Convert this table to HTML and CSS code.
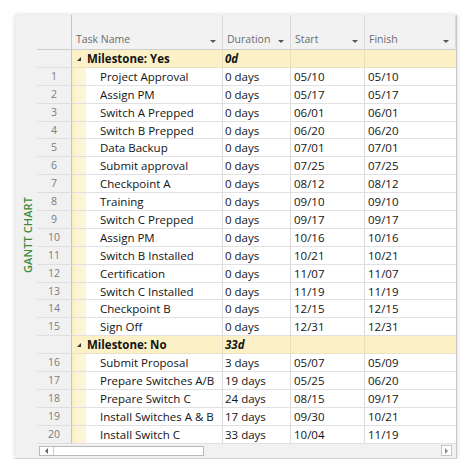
FILE: index.html
```html
<!DOCTYPE html>
<html>
<head>
<meta charset="utf-8">
<link rel="stylesheet" href="styles.css">
</head>
<body>
<div class="panel">
  <div class="side"><span class="side-label">GANTT CHART</span></div>
  <div class="sheet">
    <div class="row head">
      <div class="c num"></div>
      <div class="c hc">Task Name<i class="dd"></i></div>
      <div class="c hc">Duration<i class="dd"></i></div>
      <div class="c hc">Start<i class="dd"></i></div>
      <div class="c hc">Finish<i class="dd"></i></div>
    </div>

    <div class="row group">
      <div class="c num"></div>
      <div class="c gname"><i class="tri"></i>Milestone: Yes</div>
      <div class="c gdur">0d</div>
      <div class="c"></div>
      <div class="c"></div>
    </div>
    <div class="row task"><div class="c num">1</div><div class="c name">Project Approval</div><div class="c">0 days</div><div class="c">05/10</div><div class="c">05/10</div></div>
    <div class="row task"><div class="c num">2</div><div class="c name">Assign PM</div><div class="c">0 days</div><div class="c">05/17</div><div class="c">05/17</div></div>
    <div class="row task"><div class="c num">3</div><div class="c name">Switch A Prepped</div><div class="c">0 days</div><div class="c">06/01</div><div class="c">06/01</div></div>
    <div class="row task"><div class="c num">4</div><div class="c name">Switch B Prepped</div><div class="c">0 days</div><div class="c">06/20</div><div class="c">06/20</div></div>
    <div class="row task"><div class="c num">5</div><div class="c name">Data Backup</div><div class="c">0 days</div><div class="c">07/01</div><div class="c">07/01</div></div>
    <div class="row task"><div class="c num">6</div><div class="c name">Submit approval</div><div class="c">0 days</div><div class="c">07/25</div><div class="c">07/25</div></div>
    <div class="row task"><div class="c num">7</div><div class="c name">Checkpoint A</div><div class="c">0 days</div><div class="c">08/12</div><div class="c">08/12</div></div>
    <div class="row task"><div class="c num">8</div><div class="c name">Training</div><div class="c">0 days</div><div class="c">09/10</div><div class="c">09/10</div></div>
    <div class="row task"><div class="c num">9</div><div class="c name">Switch C Prepped</div><div class="c">0 days</div><div class="c">09/17</div><div class="c">09/17</div></div>
    <div class="row task"><div class="c num">10</div><div class="c name">Assign PM</div><div class="c">0 days</div><div class="c">10/16</div><div class="c">10/16</div></div>
    <div class="row task"><div class="c num">11</div><div class="c name">Switch B Installed</div><div class="c">0 days</div><div class="c">10/21</div><div class="c">10/21</div></div>
    <div class="row task"><div class="c num">12</div><div class="c name">Certification</div><div class="c">0 days</div><div class="c">11/07</div><div class="c">11/07</div></div>
    <div class="row task"><div class="c num">13</div><div class="c name">Switch C Installed</div><div class="c">0 days</div><div class="c">11/19</div><div class="c">11/19</div></div>
    <div class="row task"><div class="c num">14</div><div class="c name">Checkpoint B</div><div class="c">0 days</div><div class="c">12/15</div><div class="c">12/15</div></div>
    <div class="row task"><div class="c num">15</div><div class="c name">Sign Off</div><div class="c">0 days</div><div class="c">12/31</div><div class="c">12/31</div></div>

    <div class="row group">
      <div class="c num"></div>
      <div class="c gname"><i class="tri"></i>Milestone: No</div>
      <div class="c gdur">33d</div>
      <div class="c"></div>
      <div class="c"></div>
    </div>
    <div class="row task"><div class="c num">16</div><div class="c name">Submit Proposal</div><div class="c">3 days</div><div class="c">05/07</div><div class="c">05/09</div></div>
    <div class="row task"><div class="c num">17</div><div class="c name">Prepare Switches A/B</div><div class="c">19 days</div><div class="c">05/25</div><div class="c">06/20</div></div>
    <div class="row task"><div class="c num">18</div><div class="c name">Prepare Switch C</div><div class="c">24 days</div><div class="c">08/15</div><div class="c">09/17</div></div>
    <div class="row task"><div class="c num">19</div><div class="c name">Install Switches A &amp; B</div><div class="c">17 days</div><div class="c">09/30</div><div class="c">10/21</div></div>
    <div class="row task"><div class="c num">20</div><div class="c name">Install Switch C</div><div class="c">33 days</div><div class="c">10/04</div><div class="c">11/19</div></div>

    <div class="scroll">
      <div class="hs"><span class="sb-btn"><i class="arr-l"></i></span></div>
      <span class="sb-right"><i class="arr-r"></i></span>
    </div>
  </div>
</div>
</body>
</html>
```

FILE: styles.css
```css
html, body {
  margin: 0;
  padding: 0;
  background: #ffffff;
}
body {
  padding: 15px 0 0 15px;
  font-family: "Open Sans", "Liberation Sans", sans-serif;
  color: #141414;
}
.panel {
  display: flex;
  width: 442px;
  height: 444px;
  box-sizing: border-box;
  background: #f1f1f1;
  border-right: 1px solid #c9c9c9;
  border-bottom: 1px solid #cfcfcf;
  box-shadow: 0 0 4px rgba(0, 0, 0, 0.18);
}
.side {
  width: 22px;
  flex: none;
  display: flex;
  align-items: center;
  justify-content: center;
}
.side-label {
  writing-mode: vertical-rl;
  transform: rotate(180deg);
  font-size: 11px;
  font-weight: 600;
  letter-spacing: 0.1px;
  color: #3f8a3a;
  margin-left: 2px;
  margin-top: -2px;
}
.sheet {
  width: 419px;
  display: flex;
  flex-direction: column;
}
.row {
  display: grid;
  grid-template-columns: 35px 151px 68px 74px 91px;
  height: 17.9px;
  box-sizing: border-box;
}
.c {
  box-sizing: border-box;
  border-right: 1px solid #dcdcdc;
  border-bottom: 1px solid #e1e1e1;
  padding-left: 3px;
  font-size: 11.5px;
  line-height: 17px;
  white-space: nowrap;
  overflow: hidden;
  background: #ffffff;
}
.c:last-child {
  border-right: none;
}
.c.num {
  background: #f1f1f1;
  border-right: 1px solid #c4c4c4;
  border-bottom: 1px solid #dedede;
  padding-left: 0;
  text-align: center;
  color: #7c7c7c;
  font-size: 10.5px;
}
.head {
  height: 35px;
}
.head .c {
  background: #f2f2f2;
  border-bottom: 1px solid #cdcdcd;
  border-right: 1px solid #dadada;
}
.head .c.num {
  border-right: 1px solid #c4c4c4;
}
.hc {
  display: flex;
  align-items: flex-end;
  justify-content: space-between;
  padding: 0 6px 1px 4px;
  font-size: 10.5px;
  color: #6c6c6c;
}
.dd {
  width: 0;
  height: 0;
  border-left: 3px solid transparent;
  border-right: 3px solid transparent;
  border-top: 3px solid #555;
  margin-bottom: 5px;
}
.group .c {
  background: #fcf1c6;
  border-bottom: 1px solid #e9e2c4;
  border-right-color: #e6dfc0;
}
.group .c.num {
  background: #f1f1f1;
  border-right: 1px solid #c4c4c4;
  border-bottom: 1px solid #dedede;
}
.gname {
  font-weight: 700;
  display: flex;
  align-items: center;
  padding-left: 5px;
}
.tri {
  width: 0;
  height: 0;
  border-left: 4px solid transparent;
  border-bottom: 4px solid #333;
  margin-right: 6px;
  margin-top: 1px;
}
.gdur {
  font-weight: 700;
  font-style: italic;
  padding-left: 2px;
}
.task .c:nth-child(3) {
  padding-left: 2px;
}
.task .name {
  padding-left: 28px;
  background: linear-gradient(to right, #fcedb9 0, #fdf4d4 4px, #fdf5d8 14px, #ffffff 14px);
}
.scroll {
  flex: 1;
  display: flex;
  align-items: center;
  padding: 0 4px 0 2px;
}
.hs {
  width: 165px;
  height: 10px;
  box-sizing: border-box;
  background: #ffffff;
  border: 1px solid #b9b9b9;
  display: flex;
}
.sb-btn {
  width: 13px;
  height: 100%;
  border-right: 1px solid #c9c9c9;
  display: flex;
  align-items: center;
  justify-content: center;
}
.sb-right {
  margin-left: auto;
  width: 11px;
  height: 11px;
  box-sizing: border-box;
  background: #ffffff;
  border: 1px solid #c4c4c4;
  display: flex;
  align-items: center;
  justify-content: center;
}
.arr-l {
  width: 0;
  height: 0;
  border-top: 3px solid transparent;
  border-bottom: 3px solid transparent;
  border-right: 3px solid #666;
}
.arr-r {
  width: 0;
  height: 0;
  border-top: 3px solid transparent;
  border-bottom: 3px solid transparent;
  border-left: 3px solid #888;
}
```
